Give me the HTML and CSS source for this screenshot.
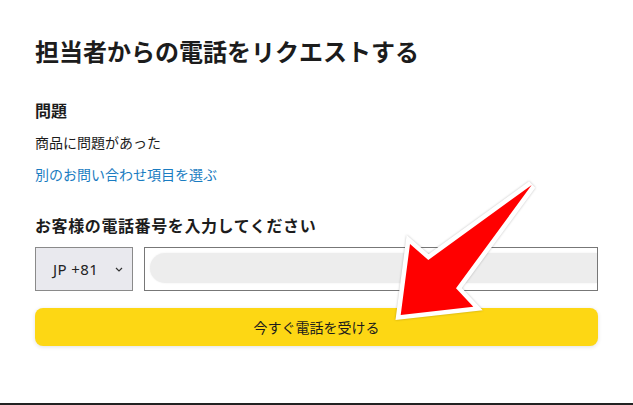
FILE: index.html
```html
<!DOCTYPE html>
<html lang="ja">
<head>
    <meta charset="UTF-8">
    <meta name="viewport" content="width=device-width, initial-scale=1.0">
    <title>担当者からの電話をリクエストする</title>
    <link rel="stylesheet" href="styles.css">
</head>
<body>
    <div class="page">
        <h1 class="title">担当者からの電話をリクエストする</h1>

        <h2 class="label">問題</h2>
        <p class="issue">商品に問題があった</p>
        <a class="change-link" href="#">別のお問い合わせ項目を選ぶ</a>

        <h2 class="label phone-label">お客様の電話番号を入力してください</h2>
        <div class="phone-row">
            <div class="country-select">
                <span>JP +81</span>
                <svg class="chevron" width="8" height="5" viewBox="0 0 8 5">
                    <path d="M1 1l3 3 3-3" fill="none" stroke="#333" stroke-width="1.2"/>
                </svg>
            </div>
            <div class="phone-input">
                <div class="phone-fill"></div>
            </div>
        </div>

        <button class="call-button">今すぐ電話を受ける</button>

        <!-- annotation arrow drawn over the form -->
        <svg class="arrow" width="160" height="160" viewBox="385 175 160 160">
            <polygon points="531.7,185 428.3,260 410,244 400.7,315 473.3,306.7 456,288.3"
                fill="#ff0000" stroke="#ffffff" stroke-width="9" stroke-linejoin="miter" paint-order="stroke"/>
        </svg>
    </div>
</body>
</html>
```

FILE: styles.css
```css
body {
    margin: 0;
    padding: 0;
    background-color: #ffffff;
    font-family: "Noto Sans CJK JP", "Noto Sans", sans-serif;
    color: #1c1c1c;
}
.page {
    position: relative;
    display: flex;
    flex-direction: column;
    align-items: flex-start;
    box-sizing: border-box;
    min-height: 100vh;
    padding: 35px 35px 0 35px;
    border-bottom: 2px solid #222;
}
.title {
    margin: 0;
    font-size: 24px;
    line-height: 32px;
    font-weight: bold;
}
.label {
    margin: 31px 0 0 0;
    font-size: 16px;
    line-height: 24px;
    font-weight: bold;
}
.issue {
    margin: 10px 0 0 0;
    font-size: 14px;
    line-height: 20px;
}
.change-link {
    margin-top: 12px;
    font-size: 14px;
    line-height: 20px;
    color: #1a7cc1;
    text-decoration: none;
}
.phone-label {
    margin-top: 29px;
    letter-spacing: 0.6px;
}

/* Phone number row */
.phone-row {
    display: flex;
    gap: 11px;
    width: 100%;
    margin-top: 10px;
}
.country-select {
    display: flex;
    align-items: center;
    gap: 17px;
    box-sizing: border-box;
    width: 98px;
    height: 44px;
    padding-left: 17px;
    background-color: #e9e9ee;
    border: 1px solid #8a8a8a;
    font-family: "Noto Sans", sans-serif;
    font-size: 15px;
    letter-spacing: 0.4px;
    color: #222;
}
.phone-input {
    flex: 1;
    box-sizing: border-box;
    height: 44px;
    padding: 5px 0 7px 5px;
    border: 1px solid #777;
    overflow: hidden;
}
.phone-fill {
    height: 100%;
    background-color: #ededed;
    border-radius: 15px 0 0 15px;
    box-shadow: 0 0 2px #ededed;
}

.call-button {
    width: 100%;
    height: 38px;
    margin-top: 17px;
    border: none;
    border-radius: 8px;
    background-color: #fdd714;
    box-shadow: 0 1px 4px rgba(0, 0, 0, 0.12);
    font-family: "Noto Sans CJK JP", sans-serif;
    font-size: 14px;
    color: #1c1c1c;
    cursor: pointer;
}

.arrow {
    position: absolute;
    left: 385px;
    top: 175px;
    filter: drop-shadow(0 0 1px rgba(0, 0, 0, 0.25));
}
```
